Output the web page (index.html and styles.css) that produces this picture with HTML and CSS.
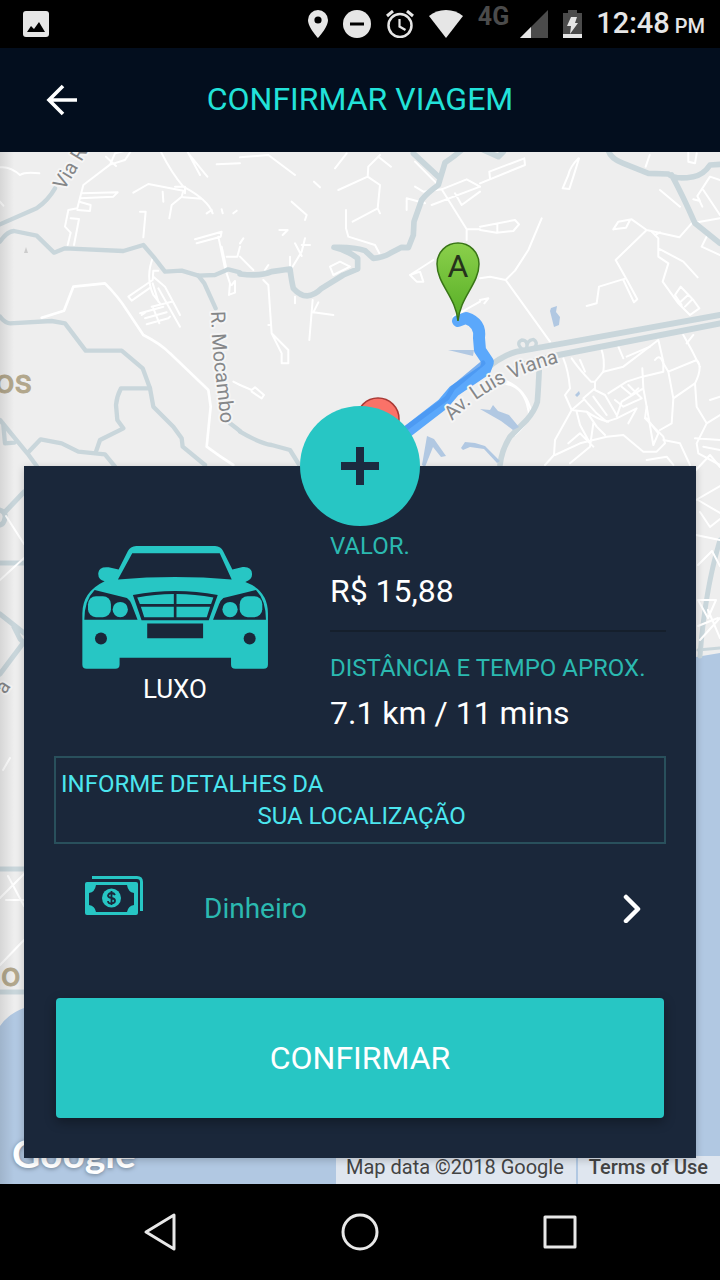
FILE: index.html
```html
<!DOCTYPE html>
<html lang="pt-BR">
<head>
<meta charset="utf-8">
<meta name="viewport" content="width=device-width, initial-scale=1">
<title>Confirmar viagem</title>
<link rel="stylesheet" href="styles.css">
</head>
<body>
<div class="status-bar">
  <svg class="status-photo" width="26" height="26" viewBox="0 0 26 26" aria-hidden="true"><rect width="26" height="26" rx="3" fill="#e6e6e6"/><path d="M4 21l4-6 3 3 5-7 6 10z" fill="#000"/></svg>
  <div class="status-icons">
    <svg width="20" height="28" viewBox="0 0 20 28" aria-hidden="true"><path fill="#e6e6e6" fill-rule="evenodd" d="M10 0a10 10 0 0 0-10 10c0 7.500 10 18 10 18s10-10.500 10-18a10 10 0 0 0-10-10zm0 6.400a3.600 3.600 0 1 1 0 7.200a3.600 3.600 0 0 1 0-7.200z"/></svg>
    <svg width="28" height="28" viewBox="0 0 28 28" aria-hidden="true"><circle cx="14" cy="14" r="14" fill="#e6e6e6"/><path d="M7 14h14" stroke="#000" stroke-width="3"/></svg>
    <svg width="28" height="28" viewBox="0 0 28 28" fill="none" stroke="#e6e6e6" aria-hidden="true"><circle cx="14" cy="15.500" r="11.500" stroke-width="2.500"/><path d="M13.500 9v7.500l6 3.500" stroke-width="2.200"/><path d="M1 6l6-5M27 6l-6-5" stroke-width="3"/></svg>
    <svg width="34" height="28" viewBox="0 0 34 28" aria-hidden="true"><path fill="#e6e6e6" d="M17 28L0 6Q7 0 17 0t17 6z"/></svg>
    <span class="status-network">4G</span>
    <svg class="status-signal" width="28" height="28" viewBox="0 0 28 28" aria-hidden="true"><path fill="#4b4b4b" d="M0 28L28 0v28z"/><path fill="#e6e6e6" d="M0 28l11-11v11z"/></svg>
    <svg width="19" height="28" viewBox="0 0 19 28" aria-hidden="true"><path fill="#4b4b4b" d="M5 0h9v3h5v25H0V3h5z"/><path fill="#e6e6e6" d="M0 24h19v4H0zM8 7h6l-2 6h3L7 24l1-8H4z"/></svg>
  </div>
  <span class="status-time">12:48<small> PM</small></span>
</div>

<header class="app-bar">
  <button class="back" type="button" aria-label="Voltar"><svg width="32" height="32" viewBox="0 0 32 32" fill="none" stroke="#fff" stroke-width="3.600" aria-hidden="true"><path d="M31 16H4M17 2L3 16l14 14"/></svg></button>
  <h1>CONFIRMAR VIAGEM</h1>
</header>

<main class="trip">
  <svg class="map" viewBox="0 152 720 1032" preserveAspectRatio="xMidYMin slice" role="img" aria-label="Mapa da viagem">
    <defs>
      <linearGradient id="pinGreen" x1="0" y1="0" x2="0" y2="1"><stop offset="0" stop-color="#8bd04b"/><stop offset="1" stop-color="#55ad25"/></linearGradient>
      <linearGradient id="edge"><stop offset="0" stop-color="#000" stop-opacity=".1"/><stop offset="1" stop-color="#000" stop-opacity="0"/></linearGradient>
      <path id="mocambo" d="M211 311Q212 348 216 380T222 440"/>
      <path id="viana" d="M452 421Q492 379 565 361"/>
    </defs>
    <rect y="152" width="720" height="1032" fill="#eee"/>
    <path fill="#b1c8e2" d="M696 657l24-4v531H0V1026q8-12 24-18h300V900h372z"/>

    <g fill="none" stroke-linejoin="round" stroke-linecap="round">
      <g transform="translate(0 150) scale(.33333)">
        <g stroke="#fff" stroke-width="6">
          <path d="M0 52Q30 48 60 75Q75 65 118 70M0 155l10 12"/>
          <path d="M395 0L375 30L330 44L250 105L232 175L205 180L195 230L212 248L203 285M330 44L345 10L385 0M318 20l30 28"/>
          <path d="M245 130L353 127L340 140L240 145M238 155L272 165L270 183L232 180M212 205L237 207L222 285"/>
          <path d="M480 0Q515 70 550 110Q625 150 638 190M400 128L445 102L550 122L545 140L515 165L508 205M488 125L490 155M550 142l55 4M525 110h30v20M420 185h17L430 262"/>
          <path d="M560 0L600 75M565 10L622 80M650 43L720 40M620 190l15-10M665 178l3 12M700 190l10-8"/>
          <path d="M585 268L665 245L662 260L590 280M655 260L675 355L690 400L687 435M680 320h32l8-30M665 290L678 350M695 405l10-12v35l-15 5"/>
          <path stroke-width="8" d="M125 503L192 482L220 410L315 400Q355 440 380 480L430 555Q480 580 510 610L625 720L632 770L620 890Q660 920 700 945"/>
          <path d="M460 320Q435 380 460 435L480 460M475 362H460L458 390L385 440L395 452L452 412M460 380L495 410L540 495M458 400L475 455M455 470L515 455M420 490L490 470M425 495L435 488M435 505L500 487M440 523L505 505L510 500M475 415L540 530M460 475l18 45M700 695l20 10"/>
        </g>
        <g stroke="#c9d6db" stroke-width="13">
          <path d="M0 275Q20 245 42 243L110 257L162 308L195 295L370 303L430 285L460 320L495 365L545 362L595 377L645 375L685 358L720 367"/>
          <path d="M0 223L110 175Q145 150 165 115M595 377L613 400L647 475M690 820L720 843"/>
          <path d="M0 500Q15 520 30 520L155 513L195 520L257 602H365L428 655L450 715L460 770L520 830L545 865L548 890L615 945"/>
          <path d="M450 715H363Q350 740 348 765L352 810L370 835L300 870L288 905M0 810L82 910L115 955M82 910L122 868L185 880L235 905L315 913L345 950M10 825l5 55l28-2"/>
        </g>
      </g>
      <g transform="translate(240 150) scale(.33333)">
        <g stroke="#fff" stroke-width="6">
          <path d="M0 22L85 15L165 75M320 10L285 55M222 95L240 112M155 155L200 195L195 210M118 240h25l-15 15M420 15L385 50L383 80L295 120M383 80L420 105L413 175L420 190M413 175L338 215M415 20l38 30M525 35L590 100M318 180V235L325 260L405 285L418 310"/>
          <path d="M0 320L40 360M75 360l10-15M150 355V320M155 355L185 305L195 265M165 280l20 38M185 285h25M0 280l10-15"/>
          <path d="M70 390L85 405L95 550L145 600V640H125V610L95 550M85 525h5M218 450L208 570M220 487L280 495M220 487l15-30M165 440v20M0 705L35 720L45 712L72 735L65 745L35 725M270 350l30-15l30 15l-50 25z"/>
          <path d="M500 180v-35l55 15M525 110L550 125L605 118L680 238H720M605 118L680 88L720 110M575 165L720 110M645 130L665 165L720 125M680 238V270M510 375L580 330M510 375L530 395L550 395L540 365zM640 500l80-45"/>
        </g>
        <g stroke="#c9d6db" stroke-width="13">
          <path stroke-width="17" d="M0 372Q60 380 95 365L150 357Q155 395 160 415Q200 460 245 415L310 375L353 357V325Q320 300 282 292Q340 290 375 302L400 325Q430 322 450 310L485 292L505 293L520 255L522 215L545 150Q560 130 595 105L615 38Q645 18 665 0M520 10L595 80"/>
          <path d="M0 845Q60 880 95 885L150 900L178 945"/>
        </g>
      </g>
      <g transform="translate(480 150) scale(.33333)">
        <g stroke="#fff" stroke-width="6">
          <path d="M0 100L135 45L133 25L28 65L30 85M295 25Q270 50 265 75L248 115L268 117L280 80L297 25M540 120L600 170M625 0v35l20 5l5-30M497 50l12-35"/>
          <path d="M0 230L105 210L117 223L100 243L50 248L0 240M52 222v23M185 205L145 300L105 362L77 390L210 575M0 385L30 380L77 390M0 450l25-5l-12 15"/>
          <path d="M400 238L415 215L455 208L500 240L598 262L635 220L720 205M400 238L438 233L450 210M500 240L407 330L438 385L357 410L350 460L320 468M438 385L472 448L462 457L430 390"/>
          <path d="M515 245L535 265V320L565 340L548 395L595 460L630 495L658 475L640 450L602 410L585 435L605 465M602 455l22-20M615 470l22-22M535 295L610 335L653 382M525 255l15-8M640 148l20 5l-8-15L690 80L720 90M670 120L720 195M655 145l12 25M680 260l-15 30l55 25"/>
          <path d="M250 625Q265 660 270 715L255 735L275 780L225 870L222 915L195 945M275 625Q295 655 333 695L345 695M365 600Q375 630 370 665L345 695L345 720L375 735L410 795M345 715L310 745L350 790L380 815L410 805L470 775L445 820"/>
          <path d="M300 630L315 665M370 665L430 650L535 570L550 635L550 665L487 680L440 695L385 730M415 590L430 625M487 655L490 715L425 755L410 800M490 715L500 770L495 805L550 860L555 880L530 905L490 905L430 855L380 860L300 880L225 915"/>
          <path d="M310 750L275 780L320 785Q355 810 385 815M340 740L380 795M425 710l30 25l20-20M405 750l25 20l55-25l-40-40M290 785L300 825L330 880M320 785L350 830L375 855M265 880L300 850L340 890M340 820L330 890L270 940M500 770L520 885L535 850L500 805M525 630Q540 610 550 640L565 665L650 630M565 665L580 745L575 820L540 840M650 630Q670 650 645 700L580 745M610 555L635 600L660 650M645 700L650 770L680 820L650 880L655 910L720 945M680 820L720 795M720 740l-30 10M645 865L720 870M670 890l50 10M550 870l50 10L630 945M500 930l60-10l20 25"/>
          <path d="M60 700Q130 700 145 780Q155 810 105 855M70 690Q140 715 155 790M440 620L510 590M620 580l20-25"/>
        </g>
        <g stroke="#c9d6db">
          <path stroke-width="17" d="M10 0L55 20L70 5M385 0Q390 25 430 40L505 70L565 72Q585 90 640 80Q670 75 690 45L720 43M575 75Q610 140 645 220L720 280"/>
          <path stroke-width="18" d="M-250 860L20 655Q70 615 110 605L250 580L720 495M110 650L220 618L720 520"/>
          <path stroke-width="10" d="M130 600Q105 580 125 570Q145 570 140 595Q140 570 160 568Q180 580 155 600"/>
          <path stroke-width="17" d="M178 650Q175 720 172 755Q165 780 140 810L90 860Q65 900 60 945"/>
        </g>
      </g>
      <g fill="#b1c8e2">
        <path d="M551 308l6-2-1 6 4 5-1 8-5 2-4-16zM448 350l26 0-1 6zM480 409l10 1 3-5 5 6 11 4 10 12-6 3-12-9zM427 436l7 3 12 17-5 1-8-10-8 20-3-2zM461 448l4-6 10 1 10 3 15 15-3 2-13-14-14-2-7 3zM575 395l4-4 1 3-3 3z"/>
      </g>
      <g stroke="#c9d6db" stroke-width="5">
        <path d="M24 492L4 513M0 510q6 2 5 8t-5 7M0 563h24M0 614l24 19M0 674L24 642M14 627l6 12 4 4M0 869h24M0 992h24M720 540Q705 590 700 656"/>
      </g>
      <g stroke="#fff" stroke-width="2">
        <path d="M6 516l18 28M0 580l24-22M3 770l7-12M8 876l16 30M0 898l24-24M0 965l24-25M6 900h18M696 470l14-15 10 12M696 500l24-14M698 500l22 13M700 512l10 15 10-8M696 535l24 5M698 565l14-14 8 15M698 600h18l-8 18zM698 626l20-8M700 640l20-22M708 610l12 28"/>
      </g>
      <path stroke="#c9d6db" stroke-width="3" d="M698 650l22-2"/>
      <path stroke="#5ba8fb" stroke-width="12" d="M458 321l8-3q15 5 13 20l1 12 8 12-3 8-31 21-11 13-61 47"/>
      <path stroke="#4794ef" stroke-width="5" opacity=".7" d="M483 363l-30 25-6 10-65 48"/>
    </g>

    <g class="map-label">
      <text x="64" y="191" transform="rotate(-59 64 191)">Via R</text>
      <text><textPath href="#mocambo">R. Mocambo</textPath></text>
      <text><textPath href="#viana">Av. Luis Viana</textPath></text>
      <text x="5" y="695" transform="rotate(-55 5 695)">a</text>
    </g>
    <g class="map-district"><text x="-5" y="393">os</text><text x="1" y="986">o</text></g>
    <path fill="#ccc" d="M26 247l2 6h-4z"/>
    <circle cx="378" cy="419" r="21" fill="#fa7268" stroke="#aa3a36" stroke-width="1.500"/>
    <path d="M458 321C456 297 437 284 437 264a21 21 0 0 1 42 0C479 284 460 297 458 321z" fill="url(#pinGreen)" stroke="#397517" stroke-width="1.500"/>
    <text class="map-pin" x="458" y="277">A</text>
    <rect y="152" width="14" height="1032" fill="url(#edge)"/>
  </svg>

  <div class="attribution">
    <span class="map-brand">Google</span>
    <span class="map-data">Map data ©2018 Google</span>
    <a class="map-terms" href="#terms">Terms of Use</a>
  </div>

  <section class="card">
    <button class="add" type="button" aria-label="Adicionar"><svg width="40" height="40" viewBox="0 0 40 40" aria-hidden="true"><path d="M20 1v38M1 20h38" stroke="#1b2a40" stroke-width="8"/></svg></button>
    <div class="summary">
      <div class="vehicle">
        <svg class="car" viewBox="65 77 560 370" aria-hidden="true">
          <path fill="#27c6c4" d="M228 77H465Q483 78 489 92L517 148L548 140Q575 138 576 160Q578 178 556 185Q624 210 624 280V433Q624 446 611 446H526Q513 446 513 433V413H178V433Q178 446 165 446H79Q66 446 66 433V280Q66 215 133 183Q112 178 114 158Q116 138 145 141L175 148L203 92Q210 78 228 77z"/>
          <g fill="#1a273a">
            <path d="M216 99H479L515 178Q345 163 173 178zM103 209L200 233Q210 240 214 252L232 299H72Q72 240 103 209zM588 209L490 233Q481 240 477 252L459 299H618Q618 240 588 209zM218 224Q345 200 473 224L446 300H244zM261 310H429V354H261z"/>
            <circle cx="122" cy="355" r="18"/><circle cx="569" cy="355" r="18"/>
          </g>
          <g fill="#27c6c4">
            <rect x="83" y="228" width="69" height="63" rx="24"/><rect x="539" y="228" width="68" height="63" rx="24"/><circle cx="180" cy="268" r="23"/><circle cx="510" cy="268" r="23"/>
            <path d="M231 232Q285 221 341 221V251H239zM349 221Q405 221 460 232L453 251H349zM242 260H341V291H252zM349 260H450L440 291H349z"/>
          </g>
        </svg>
        <span>LUXO</span>
      </div>
      <dl class="facts">
        <div><dt>VALOR.</dt><dd>R$ 15,88</dd></div>
        <div><dt>DISTÂNCIA E TEMPO APROX.</dt><dd>7.1 km / 11 mins</dd></div>
      </dl>
    </div>
    <textarea class="details" rows="2" aria-label="Detalhes da localização" placeholder="INFORME DETALHES DA&#10;                                 SUA LOCALIZAÇÃO"></textarea>
    <button class="payment" type="button">
      <svg class="money" width="58" height="40" viewBox="0 0 58 40" aria-hidden="true">
        <path d="M7 1.500H52Q56.500 1.500 56.500 6V35" fill="none" stroke="#27c6c4" stroke-width="3"/>
        <path fill="#27c6c4" fill-rule="evenodd" d="M2 6H51Q53 6 53 8V37Q53 39 51 39H2Q0 39 0 37V8Q0 6 2 6zM11 9Q10 16 4 17V29Q10 30 11 36H42Q43 30 49 29V17Q43 16 42 9z"/>
        <circle cx="26.500" cy="22" r="9.500" fill="#27c6c4"/>
        <path d="M30 19q-1-2-3.500-2T23 19.500q0 2 3.500 2.500t3.500 2.800-3.500 2.600T23 25M26.500 15v14" fill="none" stroke="#1a273a" stroke-width="1.800"/>
      </svg>
      <span>Dinheiro</span>
      <svg width="20" height="30" viewBox="0 0 20 30" fill="none" stroke="#fff" stroke-width="4.500" stroke-linecap="round" stroke-linejoin="round" aria-hidden="true"><path d="M4 4l12 12L4 28"/></svg>
    </button>
    <button class="confirm" type="button">CONFIRMAR</button>
  </section>
</main>

<nav class="system-nav">
  <button type="button" aria-label="Voltar"><svg width="40" height="40" viewBox="0 0 40 40" aria-hidden="true"><path d="M34 3V37L6 20z"/></svg></button>
  <button type="button" aria-label="Início"><svg width="40" height="40" viewBox="0 0 40 40" aria-hidden="true"><circle cx="20" cy="20" r="17"/></svg></button>
  <button type="button" aria-label="Recentes"><svg width="40" height="40" viewBox="0 0 40 40" aria-hidden="true"><rect x="5" y="5" width="30" height="30"/></svg></button>
</nav>
</body>
</html>
```

FILE: styles.css
```css
* { box-sizing: border-box; }
body {
  margin: 0;
  min-height: 100vh;
  display: flex;
  flex-direction: column;
  font-family: Roboto, "Liberation Sans", sans-serif;
  background: #000;
}
button {
  border: 0;
  padding: 0;
  background: none;
  font: inherit;
  color: inherit;
  cursor: pointer;
}
svg { display: block; flex: none; }

.status-bar {
  display: flex;
  align-items: center;
  gap: 14px;
  height: 48px;
  padding: 0 15px 0 23px;
  color: #e6e6e6;
}
.status-photo { margin-right: auto; }
.status-icons { display: flex; align-items: center; gap: 15px; }
.status-network {
  align-self: flex-start;
  margin-top: -5px;
  font-size: 25px;
  line-height: 24px;
  font-weight: 700;
  color: #4b4b4b;
}
.status-signal { margin-left: -4px; }
.status-time { font-size: 29px; line-height: 32px; font-weight: 500; white-space: pre; }
.status-time small { font-size: 20px; }

.app-bar {
  display: grid;
  grid-template-columns: 78px 1fr 78px;
  align-items: center;
  height: 104px;
  background: #030e1e;
}
.back { justify-self: end; }
.app-bar h1 {
  margin: 0;
  text-align: center;
  font-size: 32px;
  line-height: 40px;
  padding-bottom: 2px;
  font-weight: 400;
  color: #22e2d9;
}

.trip {
  position: relative;
  flex: 1;
  padding: 314px 24px 26px;
  overflow: hidden;
}
.map { position: absolute; inset: 0; width: 100%; height: 100%; }
.map-label {
  font-size: 20px;
  fill: #858789;
  stroke: #f5f5f5;
  stroke-width: 4px;
  stroke-linejoin: round;
  paint-order: stroke;
}
.map-district { font-size: 34px; fill: #b2a78c; stroke: #b2a78c; }
.map-pin { font-size: 32px; fill: #26331c; text-anchor: middle; }

.attribution {
  position: absolute;
  left: 0;
  right: 0;
  bottom: 0;
  display: flex;
  align-items: flex-end;
  gap: 2px;
  font-size: 20px;
  line-height: 22px;
  color: #444;
}
.map-brand {
  margin-right: auto;
  padding-left: 12px;
  font-family: Lato, sans-serif;
  font-size: 39px;
  font-weight: 700;
  line-height: 62px;
  color: #fff;
  text-shadow: 0 1px 4px #6f7f91;
}
.map-data, .map-terms {
  height: 28px;
  background: #dfe6ef;
  color: inherit;
  text-decoration: none;
}
.map-data { padding: 0 12px 0 10px; }
.map-terms { padding: 0 12px 0 11px; font-weight: 500; }

.card {
  position: relative;
  display: flex;
  flex-direction: column;
  padding: 0 30px 40px;
  background: #1a273a;
  box-shadow: 0 2px 8px #0003;
}
.add {
  align-self: center;
  display: grid;
  place-items: center;
  width: 120px;
  height: 120px;
  margin-top: -60px;
  border-radius: 50%;
  background: #27c6c4;
}
.summary {
  display: grid;
  grid-template-columns: 36fr 50fr;
  gap: 34px;
}
.vehicle {
  display: flex;
  flex-direction: column;
  align-items: center;
  gap: 4px;
  padding-top: 20px;
  font-size: 26px;
  line-height: 32px;
  color: #fff;
}
.car { width: 77%; }
.facts { margin: 0; padding-top: 4px; }
.facts div { padding-bottom: 19px; }
.facts div + div { padding-top: 20px; border-top: 2px solid #151f2c; }
.facts dt { font-size: 24px; line-height: 32px; color: #2bb9b0; }
.facts dd { margin: 9px 0 0; font-size: 32px; line-height: 40px; color: #fff; }

.details {
  display: block;
  width: 100%;
  height: 88px;
  margin-top: 4px;
  padding: 10px 5px;
  border: 2px solid #29505c;
  border-radius: 0;
  outline: 0;
  resize: none;
  overflow: hidden;
  background: transparent;
  font: 24px/32px Roboto, "Liberation Sans", sans-serif;
  color: #4ce6ef;
}
.details::placeholder { color: #4ce6ef; opacity: 1; }

.payment {
  display: flex;
  align-items: center;
  height: 88px;
  margin: 20px 0 46px;
  padding: 0 24px 0 31px;
  font-size: 28px;
  color: #2bb9b0;
}
.payment span { flex: 1; margin-left: 61px; text-align: left; }
.money { align-self: flex-start; margin-top: 12px; }

.confirm {
  height: 120px;
  margin: 0 2px;
  border-radius: 4px;
  background: #27c6c4;
  box-shadow: 0 4px 12px #0005;
  font-size: 32px;
  color: #fff;
}

.system-nav {
  display: flex;
  justify-content: center;
  align-items: center;
  gap: 160px;
  height: 96px;
}
.system-nav svg { fill: none; stroke: #e8e8e8; stroke-width: 3px; stroke-linejoin: round; }
```
